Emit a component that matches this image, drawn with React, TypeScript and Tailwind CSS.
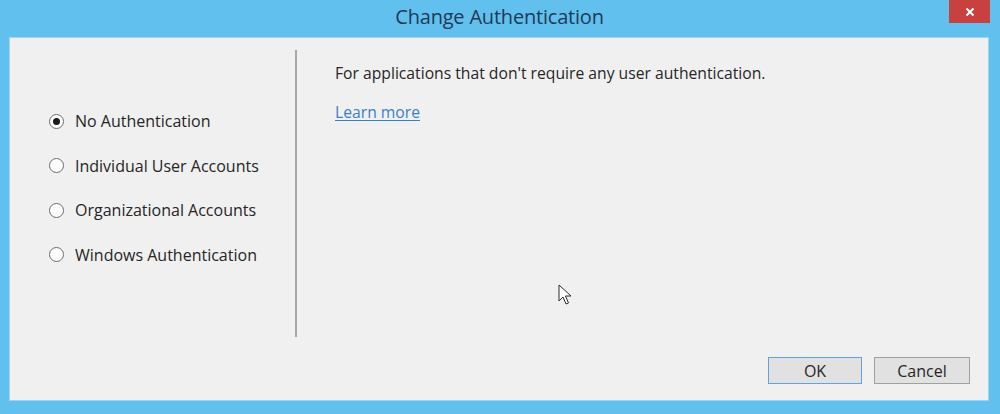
import { useState } from 'react';

const options = [
  'No Authentication',
  'Individual User Accounts',
  'Organizational Accounts',
  'Windows Authentication',
];

function Radio({ checked }: { checked: boolean }) {
  return (
    <span className="w-[15px] h-[15px] rounded-full border border-[#6b6b6b] bg-white flex items-center justify-center shrink-0">
      {checked && <span className="w-[7px] h-[7px] rounded-full bg-[#1a1a1a]" />}
    </span>
  );
}

export default function App() {
  const [selected, setSelected] = useState(0);

  return (
    <div
      className="w-[1000px] h-[414px] bg-[#62c0ee] flex flex-col overflow-hidden"
      style={{ fontFamily: '"Open Sans", "Noto Sans", sans-serif' }}
    >
      {/* Title bar */}
      <div className="h-[37px] flex items-start shrink-0">
        <div className="flex-1 flex justify-center pt-[2px] pl-[50px]">
          <span className="text-[20px] text-[#1f3a57] tracking-[-0.2px]">Change Authentication</span>
        </div>
        <div className="w-[41px] h-[23px] bg-[#c9413f] flex items-center justify-center mr-[10px]">
          <svg width="10" height="10" viewBox="0 0 10 10">
            <path d="M1.5 1.5l7 7M8.5 1.5l-7 7" stroke="#fff" strokeWidth="2" />
          </svg>
        </div>
      </div>

      {/* Client area */}
      <div className="ml-[9px] mr-[11px] h-[364px] bg-[#f0f0f0] border border-[#9fd3ee] flex flex-col">
        <div className="flex flex-1">
          {/* Options */}
          <div className="w-[287px] pt-[61px] pl-[39px] flex flex-col gap-[24.5px] border-r-2 border-[#a8a8a8] mt-[12px] mb-[20px]">
            {options.map((o, i) => (
              <label
                key={o}
                onClick={() => setSelected(i)}
                className="flex items-center gap-[11px] h-[20px] cursor-default"
              >
                <Radio checked={selected === i} />
                <span className="text-[16px] text-[#262626] leading-none">{o}</span>
              </label>
            ))}
          </div>

          {/* Description */}
          <div className="flex-1 pl-[38px] pt-[24px] relative">
            <p className="text-[15.7px] text-[#262626] leading-[22px]">
              For applications that don't require any user authentication.
            </p>
            <a className="inline-block mt-[17px] text-[15.7px] text-[#3a7fc8] underline underline-offset-2 leading-[22px]">
              Learn more
            </a>
            <svg
              className="absolute left-[261px] top-[246px]"
              width="14"
              height="22"
              viewBox="0 0 14 22"
            >
              <path
                d="M1 1v16l4-4 3 7 2.5-1-3-7h5.5z"
                fill="#fff"
                stroke="#2a2a2a"
                strokeWidth="1"
                strokeLinejoin="round"
              />
            </svg>
          </div>
        </div>

        {/* Buttons */}
        <div className="flex justify-end gap-[12px] pr-[18px] pb-[16px]">
          <button className="w-[94px] h-[27px] bg-[#e1e1e1] border border-[#5ea4e0] text-[16px] text-[#262626]">
            OK
          </button>
          <button className="w-[96px] h-[27px] bg-[#e1e1e1] border border-[#a0a0a0] text-[16px] text-[#262626]">
            Cancel
          </button>
        </div>
      </div>
    </div>
  );
}
